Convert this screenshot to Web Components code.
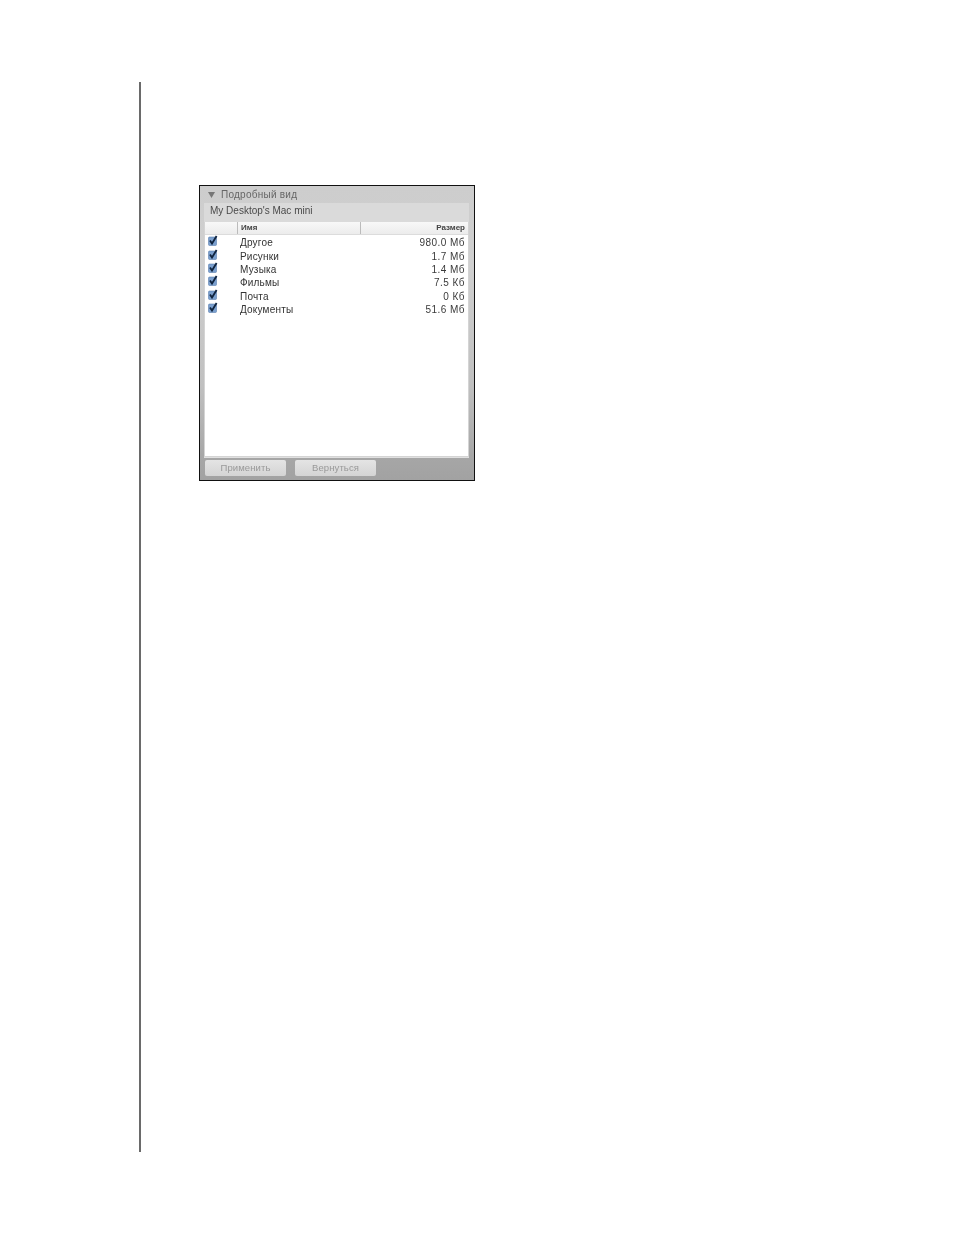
<!DOCTYPE html>
<html lang="ru">
<head>
<meta charset="utf-8">
<title>Подробный вид</title>
<style>
  html, body { margin: 0; background: #fff; }
</style>
</head>
<body>
<page-frame>
  <detail-panel title="Подробный вид" device="My Desktop's Mac mini">
    <file-row name="Другое" size="980.0 Мб"></file-row>
    <file-row name="Рисунки" size="1.7 Мб"></file-row>
    <file-row name="Музыка" size="1.4 Мб"></file-row>
    <file-row name="Фильмы" size="7.5 Кб"></file-row>
    <file-row name="Почта" size="0 Кб"></file-row>
    <file-row name="Документы" size="51.6 Мб"></file-row>
  </detail-panel>
</page-frame>

<script>
const frameTemplate = document.createElement('template')
frameTemplate.innerHTML = `
<style>
  :host {
    display: block;
    box-sizing: border-box;
    width: 815px;
    height: 1070px;
    margin: 82px 0 0 139px;
    padding: 103px 0 0 58px;
    border-left: 2px solid #6a6a6a;
  }
</style>
<slot></slot>
`
customElements.define('page-frame',
  class extends HTMLElement {
    constructor() {
      super()
      this.attachShadow({ mode: 'open' })
        .appendChild(frameTemplate.content.cloneNode(true))
    }
  }
)

const panelTemplate = document.createElement('template')
panelTemplate.innerHTML = `
<style>
  :host {
    display: flex;
    flex-direction: column;
    box-sizing: border-box;
    width: 276px;
    height: 296px;
    border: 1px solid #111;
    background: #d8d8d8;
    font: 9px "Liberation Sans", Arial, sans-serif;
    color: #333;
    overflow: hidden;
  }
  .inner {
    display: flex;
    flex-direction: column;
    flex: 1;
    min-height: 0;
    filter: blur(0.6px);
    background: linear-gradient(#cdcdcd 0, #d0d0d0 80px, #c0c0c0 200px, #a6a6a6 272px, #a2a2a2 100%);
  }
  .title {
    display: flex;
    align-items: center;
    gap: 6px;
    height: 17px;
    padding-left: 8px;
    color: #666;
    font-size: 10px;
    letter-spacing: 0.25px;
  }
  .title svg { width: 7px; height: 6px; }
  .body {
    display: flex;
    flex-direction: column;
    flex: 1;
    min-height: 0;
    margin: 0 5px 0 4px;
    border: 1px solid #d4d4d4;
    border-top: 0;
    background: #fff;
    box-shadow: 0 1px 0 #e0e0e0;
  }
  .device {
    display: flex;
    align-items: center;
    box-sizing: border-box;
    height: 19px;
    margin: 0 -1px;
    padding: 0 0 4px 6px;
    background: #dadada;
    color: #4a4a4a;
    font-size: 10px;
  }
  .head {
    display: grid;
    grid-template-columns: 32px 123px 1fr;
    height: 12px;
    line-height: 12px;
    background: linear-gradient(#f8f8f8, #ececec);
    border-bottom: 1px solid #dcdcdc;
    font-size: 8px;
    font-weight: bold;
    color: #444;
  }
  .head span { border-left: 1px solid #bbb; padding-left: 3px; }
  .head span:last-child { text-align: right; padding-right: 3px; }
  .rows { display: flex; flex-direction: column; padding-top: 1px; }
  .footer {
    display: flex;
    gap: 9px;
    height: 23px;
    padding: 3px 0 0 5px;
    box-sizing: border-box;
  }
  button {
    box-sizing: border-box;
    width: 81px;
    height: 16px;
    padding: 0 0 2px;
    border: 0;
    border-radius: 2px;
    background: linear-gradient(#e4e4e4, #d4d4d4);
    color: #999;
    font: 9.5px "Liberation Sans", Arial, sans-serif;
    letter-spacing: 0.1px;
  }
</style>
<div class="inner">
  <div class="title">
    <svg viewBox="0 0 7 6"><path d="M0 0h7L3.5 6z" fill="#777"/></svg>
    <span id="title"></span>
  </div>
  <div class="body">
    <div class="device" id="device"></div>
    <div class="head"><i></i><span>Имя</span><span>Размер</span></div>
    <div class="rows"><slot></slot></div>
  </div>
  <div class="footer">
    <button>Применить</button>
    <button>Вернуться</button>
  </div>
</div>
`
customElements.define('detail-panel',
  class extends HTMLElement {
    constructor() {
      super()
      this.attachShadow({ mode: 'open' })
        .appendChild(panelTemplate.content.cloneNode(true))
      this.shadowRoot.querySelector('#title').textContent = this.getAttribute('title')
      this.shadowRoot.querySelector('#device').textContent = this.getAttribute('device')
    }
  }
)

const rowTemplate = document.createElement('template')
rowTemplate.innerHTML = `
<style>
  :host {
    display: grid;
    grid-template-columns: 32px 1fr auto;
    align-items: center;
    height: 13.4px;
    padding: 0 3px;
    font-size: 10px;
    letter-spacing: 0.2px;
    color: #333;
  }
  svg { width: 10px; height: 11px; display: block; margin-top: -4px; }
  .size { color: #3a3a3a; letter-spacing: 0.45px; }
</style>
<svg viewBox="0 0 10 11">
  <rect x="0.5" y="2" width="8" height="8.5" rx="1" fill="#7ba0cf" stroke="#5c80b0" stroke-width="0.6"/>
  <path d="M2 5.5l2 3L8.6 1" fill="none" stroke="#10243f" stroke-width="1.8"/>
</svg>
<span id="name"></span>
<span class="size" id="size"></span>
`
customElements.define('file-row',
  class extends HTMLElement {
    constructor() {
      super()
      this.attachShadow({ mode: 'open' })
        .appendChild(rowTemplate.content.cloneNode(true))
      this.shadowRoot.querySelector('#name').textContent = this.getAttribute('name')
      this.shadowRoot.querySelector('#size').textContent = this.getAttribute('size')
    }
  }
)
</script>
</body>
</html>
